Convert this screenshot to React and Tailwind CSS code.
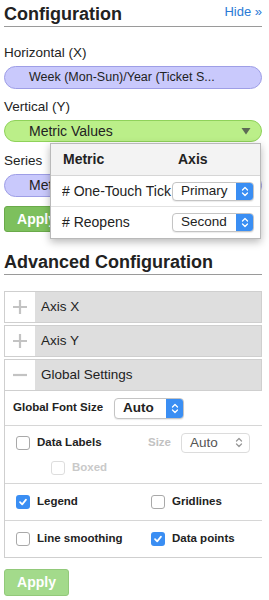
import React from "react"

const font = "font-['Liberation_Sans','Helvetica',sans-serif]"

function Checkbox({ checked, disabled }) {
  if (checked) {
    return (
      <span className="flex h-[14px] w-[14px] shrink-0 items-center justify-center rounded-[3px] bg-[#3a8ef3]">
        <svg width="10" height="10" viewBox="0 0 10 10">
          <path d="M2 5.2 L4.2 7.4 L8 2.6" stroke="white" strokeWidth="1.7" fill="none" strokeLinecap="round" strokeLinejoin="round" />
        </svg>
      </span>
    )
  }
  return (
    <span
      className={`h-[14px] w-[14px] shrink-0 rounded-[3px] border bg-white ${
        disabled ? "border-[#ddd]" : "border-[#a9a9a9]"
      }`}
    />
  )
}

function UpDown({ color }) {
  return (
    <svg width="8" height="11" viewBox="0 0 8 11">
      <path d="M1.5 4 L4 1.5 L6.5 4 M1.5 7 L4 9.5 L6.5 7" stroke={color} strokeWidth="1.3" fill="none" strokeLinecap="round" strokeLinejoin="round" />
    </svg>
  )
}

function MacSelect({ value, className }) {
  return (
    <div className={`flex items-stretch overflow-hidden rounded-[4px] border border-[#c4c4c4] bg-white shadow-[0_1px_1px_rgba(0,0,0,0.08)] ${className}`}>
      <span className="flex flex-1 items-center pl-[8px] text-[13.5px] text-[#222]">{value}</span>
      <span className="flex w-[17px] items-center justify-center bg-[#3a8ef3]">
        <UpDown color="white" />
      </span>
    </div>
  )
}

function AccordionRow({ label, open }) {
  return (
    <div className="flex h-[32px] border border-[#cfcfcf]">
      <div className="flex w-[30px] items-center justify-center bg-white">
        <svg width="16" height="16" viewBox="0 0 16 16">
          <path d={open ? "M1 8 H15" : "M1 8 H15 M8 1 V15"} stroke="#c3c3c3" strokeWidth="2.2" />
        </svg>
      </div>
      <div className="flex flex-1 items-center bg-[#dedede] pl-[6px] text-[13.5px] text-[#222]">{label}</div>
    </div>
  )
}

export default function App() {
  return (
    <div className={`relative h-[600px] w-[269px] overflow-hidden bg-white px-[4px] pr-[7px] ${font} text-[#222]`}>
      {/* Configuration header */}
      <div className="flex h-[27px] items-end justify-between border-b border-[#9a9a9a] pb-[3px]">
        <h2 className="text-[18px] font-bold leading-none">Configuration</h2>
        <a className="mb-[5px] text-[13px] leading-none text-[#2a7ad6]">Hide »</a>
      </div>

      <div className="mt-[18px] text-[13.5px] leading-[15px]">Horizontal (X)</div>
      <div className="mt-[6px] flex h-[23px] items-center truncate rounded-full border border-[#9e9ee6] bg-[#c9c9fc] pl-[24px] text-[12.5px]">
        Week (Mon-Sun)/Year (Ticket S...
      </div>

      <div className="mt-[10px] text-[13.5px] leading-[15px]">Vertical (Y)</div>
      <div className="mt-[6px] flex h-[22px] items-center justify-between rounded-full border border-[#8fd25a] bg-[#bbef89] pl-[24px] pr-[10px] text-[14px]">
        <span>Metric Values</span>
        <svg width="10" height="8" viewBox="0 0 10 8">
          <path d="M0.5 1 H9.5 L5 7.5 Z" fill="#5d6a55" />
        </svg>
      </div>

      <div className="mt-[11px] text-[13.5px] leading-[15px]">Series</div>
      <div className="mt-[6px] flex h-[23px] items-center rounded-full border border-[#9e9ee6] bg-[#c9c9fc] pl-[24px] text-[14px]">
        Metric Names
      </div>
      <button className="mt-[9px] flex h-[26px] w-[65px] items-center justify-center rounded-[3px] border border-[#6aaa4a] bg-[#7dc05d] text-[14px] font-bold text-white">
        Apply
      </button>

      {/* Metric/Axis popup */}
      <div className="absolute left-[50px] top-[143px] w-[211px] border border-[#b9b9b9] bg-white shadow-[0_3px_8px_rgba(0,0,0,0.28)]">
        <div className="flex h-[32px] items-center border-b border-[#d6d6d6] bg-[#f3f3f3] text-[14px] font-bold">
          <span className="w-[127px] pl-[12px]">Metric</span>
          <span>Axis</span>
        </div>
        <div className="flex h-[31px] items-center border-b border-[#e2e2e2] pl-[11px] pr-[6px]">
          <span className="w-[110px] overflow-hidden whitespace-nowrap text-[14px]"># One-Touch Tick</span>
          <MacSelect value="Primary" className="h-[19px] w-[82px]" />
        </div>
        <div className="flex h-[31px] items-center pl-[11px] pr-[6px]">
          <span className="w-[110px] text-[14px]"># Reopens</span>
          <MacSelect value="Second" className="h-[19px] w-[82px]" />
        </div>
      </div>

      {/* Advanced configuration */}
      <div className="mt-[16px] flex h-[27px] items-end border-b border-[#9a9a9a] pb-[3px]">
        <h2 className="text-[18px] font-bold leading-none">Advanced Configuration</h2>
      </div>

      <div className="mt-[16px] flex flex-col gap-[2px]">
        <AccordionRow label="Axis X" />
        <AccordionRow label="Axis Y" />
        <AccordionRow label="Global Settings" open />
      </div>

      <div className="border-b border-l border-[#cfcfcf] text-[11.5px] font-bold">
        <div className="flex h-[35px] items-center border-b border-[#d6d6d6] pl-[8px]">
          <span className="w-[101px]">Global Font Size</span>
          <MacSelect value="Auto" className="h-[21px] w-[70px]" />
        </div>
        <div className="flex h-[58px] flex-col justify-center border-b border-[#d6d6d6] pl-[11px]">
          <div className="flex items-center">
            <Checkbox />
            <span className="ml-[7px] w-[111px]">Data Labels</span>
            <span className="w-[33px] text-[#c2c2c2]">Size</span>
            <div className="flex h-[20px] w-[69px] items-center justify-between rounded-[4px] border border-[#dcdcdc] bg-white pl-[8px] pr-[6px] text-[13.5px] font-normal text-[#555]">
              <span>Auto</span>
              <UpDown color="#999" />
            </div>
          </div>
          <div className="ml-[35px] mt-[6px] flex items-center">
            <Checkbox disabled />
            <span className="ml-[7px] text-[#c9c9c9]">Boxed</span>
          </div>
        </div>
        <div className="flex h-[37px] items-center border-b border-[#d6d6d6] pl-[11px]">
          <Checkbox checked />
          <span className="ml-[7px] w-[114px]">Legend</span>
          <Checkbox />
          <span className="ml-[7px]">Gridlines</span>
        </div>
        <div className="flex h-[36px] items-center pl-[11px]">
          <Checkbox />
          <span className="ml-[7px] w-[114px]">Line smoothing</span>
          <Checkbox checked />
          <span className="ml-[7px]">Data points</span>
        </div>
      </div>

      <button className="mt-[11px] flex h-[27px] w-[65px] items-center justify-center rounded-[3px] border border-[#92c97a] bg-[#a3da8b] text-[14px] font-bold text-white">
        Apply
      </button>
    </div>
  )
}
